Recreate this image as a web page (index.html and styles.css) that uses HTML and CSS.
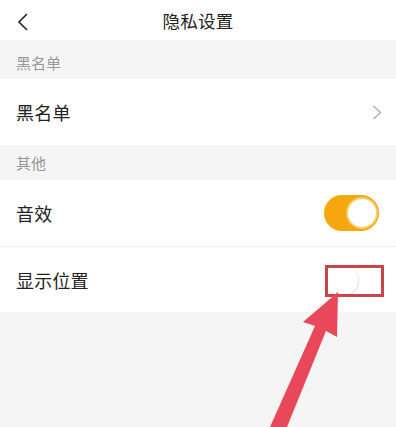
FILE: index.html
```html
<!DOCTYPE html>
<html lang="zh">
<head>
<meta charset="utf-8">
<link rel="stylesheet" href="styles.css">
</head>
<body>
<div class="page">
  <header class="topbar">
    <span class="back">
      <svg width="12" height="18" viewBox="0 0 12 18"><path d="M10 1 L2 9 L10 17" fill="none" stroke="#222" stroke-width="1.6"/></svg>
    </span>
    <h1 class="title">隐私设置</h1>
    <span></span>
  </header>
  <div class="section-title s1">黑名单</div>
  <div class="row r1">
    <span class="label">黑名单</span>
    <svg class="chev" width="10" height="15" viewBox="0 0 10 15"><path d="M1.5 1 L8.5 7.5 L1.5 14" fill="none" stroke="#aaa" stroke-width="1.3"/></svg>
  </div>
  <div class="section-title s2">其他</div>
  <div class="row r2 bordered">
    <span class="label">音效</span>
    <span class="switch on"><span class="knob"></span></span>
  </div>
  <div class="row r3">
    <span class="label">显示位置</span>
    <span class="switch off"><span class="knob"></span></span>
  </div>
  <div class="highlight"></div>
  <svg class="arrow" width="396" height="427" viewBox="0 0 396 427">
    <polygon points="338,292 303,322 315,326 270,427 287,427 326,331 337,337" fill="#e8485a"/>
  </svg>
</div>
</body>
</html>
```
FILE: styles.css
```css
html, body {
  margin: 0;
  padding: 0;
  background: #f5f5f5;
}
.page {
  position: relative;
  width: 396px;
  height: 427px;
  overflow: hidden;
  background: #f5f5f5;
  font-family: "Noto Sans CJK SC", "Noto Sans", sans-serif;
  color: #222;
}
.topbar {
  height: 40px;
  background: #fff;
  display: grid;
  grid-template-columns: 40px 1fr 40px;
  align-items: center;
}
.back {
  display: flex;
  padding-left: 17px;
  padding-top: 2px;
}
.title {
  margin: 0;
  text-align: center;
  font-size: 17.5px;
  font-weight: 400;
  line-height: 40px;
  padding-top: 1px;
  letter-spacing: 0.3px;
}
.section-title {
  background: #f5f5f5;
  color: #999;
  font-size: 15px;
  padding-left: 16px;
  display: flex;
  align-items: center;
  box-sizing: border-box;
}
.s1 { height: 39px; padding-top: 5px; }
.s2 { height: 35px; }
.row {
  background: #fff;
  display: flex;
  align-items: center;
  justify-content: space-between;
  padding: 0 16px;
}
.r1 { height: 66px; padding-right: 14px; }
.r2 { height: 66px; }
.r3 { height: 65px; }
.bordered { border-bottom: 1px solid #ececec; }
.label {
  font-size: 18px;
  letter-spacing: 0.2px;
}
.switch {
  position: relative;
  width: 55px;
  height: 36px;
  border-radius: 18px;
  margin-right: 1px;
  box-sizing: border-box;
}
.switch .knob {
  position: absolute;
  top: 2px;
  width: 32px;
  height: 32px;
  border-radius: 50%;
  background: #fff;
  box-sizing: border-box;
}
.switch.on {
  background: #f6a70d;
}
.switch.on .knob {
  right: 1px;
  border: 2px solid #f3cf66;
}
.switch.off {
  background: #fff;
}
.switch.off .knob {
  left: 2px;
  box-shadow: 1px 1px 2px rgba(0,0,0,0.12);
}
.highlight {
  position: absolute;
  left: 325px;
  top: 265px;
  width: 59px;
  height: 32px;
  box-sizing: border-box;
  border: 3px solid #c8464b;
}
.arrow {
  position: absolute;
  left: 0;
  top: 0;
}
```
